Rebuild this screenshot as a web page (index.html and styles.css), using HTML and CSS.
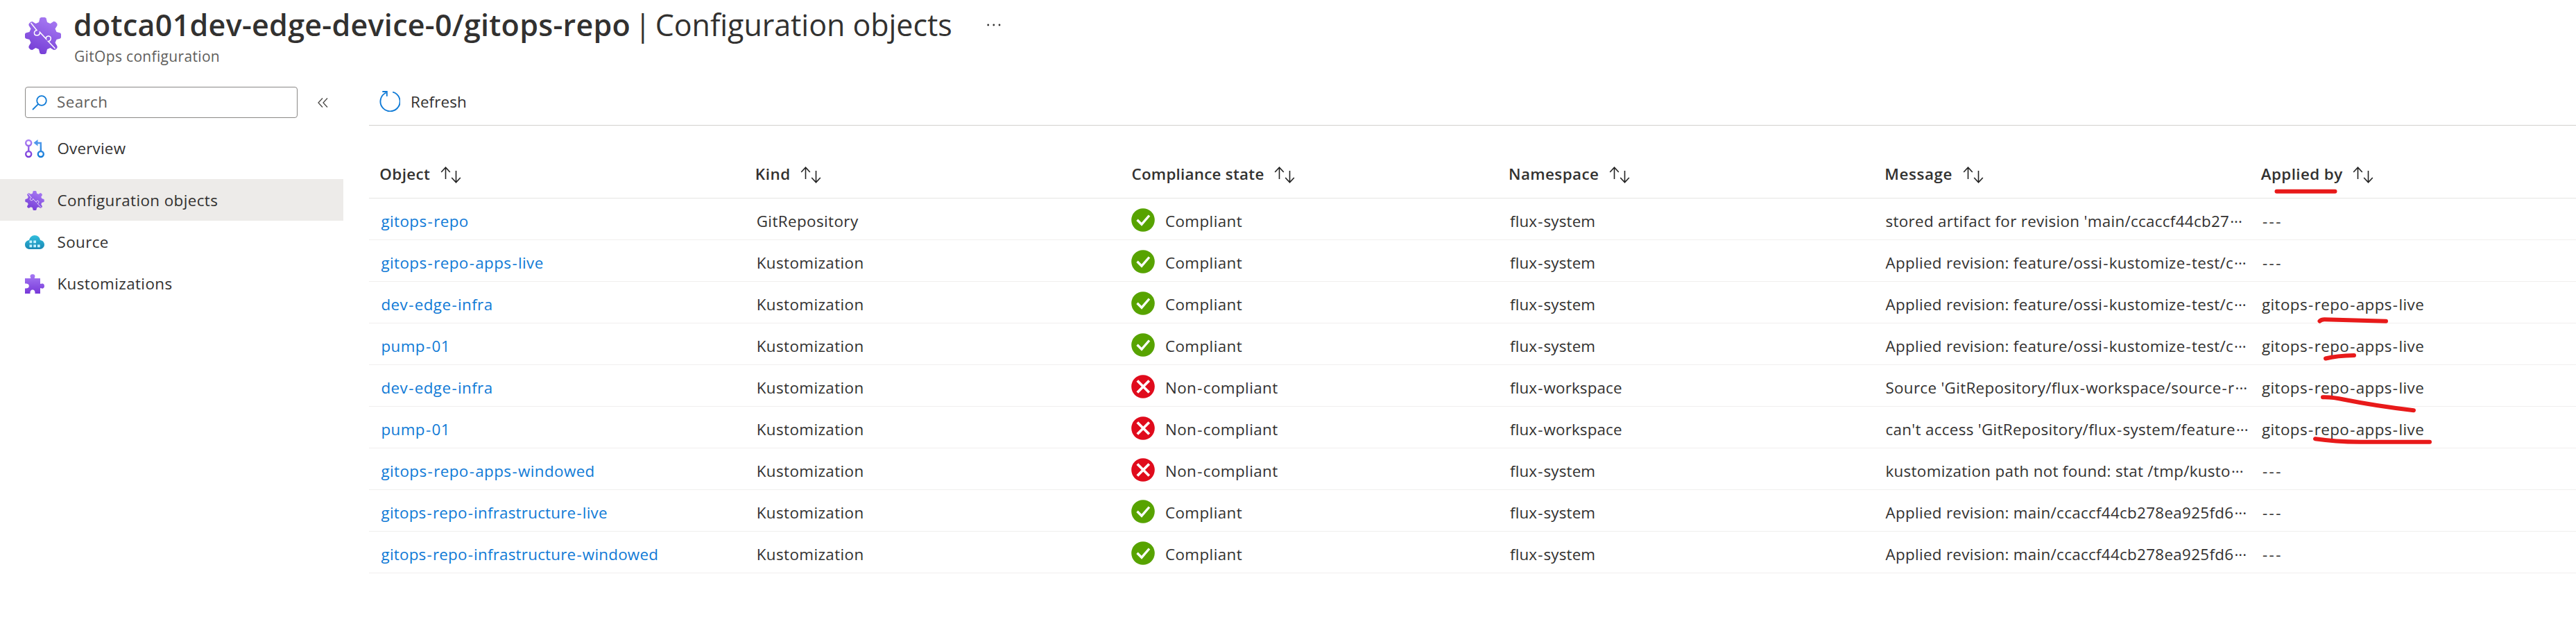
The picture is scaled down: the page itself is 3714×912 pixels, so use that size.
FILE: index.html
```
<!DOCTYPE html>
<html lang="en">
<head>
<meta charset="utf-8">
<title>Configuration objects</title>
<link rel="stylesheet" href="styles.css">
</head>
<body>
<svg class="defs" aria-hidden="true">
  <defs>
    <linearGradient id="purple" x1="0" y1="1" x2="0.4" y2="0"><stop offset="0" stop-color="#6f35d2"/><stop offset="1" stop-color="#a274f0"/></linearGradient>
    <linearGradient id="purpleV" x1="0" y1="1" x2="0" y2="0"><stop offset="0" stop-color="#7738d8"/><stop offset="1" stop-color="#a67af4"/></linearGradient>
    <linearGradient id="blueV" gradientUnits="userSpaceOnUse" x1="0" y1="27" x2="0" y2="0"><stop offset="0" stop-color="#0f7ad6"/><stop offset="1" stop-color="#5ea0ef"/></linearGradient>
    <linearGradient id="purpleU" gradientUnits="userSpaceOnUse" x1="0" y1="27" x2="0" y2="0"><stop offset="0" stop-color="#7738d8"/><stop offset="1" stop-color="#b088f6"/></linearGradient>
    <linearGradient id="teal" x1="0" y1="1" x2="0" y2="0"><stop offset="0" stop-color="#1988b4"/><stop offset="1" stop-color="#32bedd"/></linearGradient>
    <symbol id="gear" viewBox="0 0 52 53">
      <path fill="url(#purple)" d="M23.500 0h5l2 1 1.500 6 4.500 2 5-3.200 2.500.7 2.500 2.800v2.500l-3 4.700 2 4.500 5.500 1.500 1 1.500v5l-1 1.500-5.500 1.500-2 4.500 3 5v2.500l-2.500 2.500-2.500.5-5-3-4.500 2-1.500 6-2 1h-5l-2-1-1.500-6-4.500-2-5 3-2.500-.5-2.500-2.500v-2.500l3-5-2-4.500-5.500-1.500-1-1.500v-5l1-1.500 5.500-1.500 2-4.500-3-5V9.500l2.500-2.800 2.500-.7 5 3 4.500-2 1.500-6z"/>
      <path fill="none" stroke="#fff" stroke-width="1.500" d="M8.500 8l8.500 10.500c-5 1.500-4.500 7.500 0 7.500 3.500 0 4.500-2 4.500-4.500l9 9.500c-1-5 6.500-5.500 6.800-1 .2 3-1.800 4.500-3.800 4.500L43.500 45"/>
    </symbol>
    <symbol id="sort" viewBox="0 0 30 24"><path d="M7.500 18V1M1.200 8L7.500 1.200 13.800 8M22.500 6v17M16.200 16l6.300 6.800L28.800 16"/></symbol>
    <symbol id="ok" viewBox="0 0 34 34"><circle cx="17" cy="17" r="16.800" fill="#57a300"/><path fill="none" stroke="#fff" stroke-width="3.400" d="M8.500 16.700l6.500 6.500L26 10.500"/></symbol>
    <symbol id="bad" viewBox="0 0 34 34"><circle cx="17" cy="17" r="16.800" fill="#e00b1c"/><path fill="none" stroke="#fff" stroke-width="3.800" d="M8.800 8.500l17 17M25.800 8.500l-17 17"/></symbol>
  </defs>
</svg>
<header class="head">
  <svg class="head-icon"><use href="#gear"/></svg>
  <div>
    <h1 class="title"><b class="title-name">dotca01dev-edge-device-0/gitops-repo</b><span class="title-bar">|</span><span class="title-page">Configuration objects</span><svg class="more" viewBox="0 0 20 4"><circle cx="1.700" cy="2" r="1.400"/><circle cx="9.800" cy="2" r="1.400"/><circle cx="18" cy="2" r="1.400"/></svg></h1>
    <p class="subtitle">GitOps configuration</p>
  </div>
</header>
<div class="layout">
  <nav class="side">
    <div class="search-row">
      <div class="search"><svg class="search-icon" viewBox="0 0 22 22"><circle cx="14" cy="8" r="6.800"/><path d="M9.200 12.800L1 21"/></svg><span class="search-text">Search</span></div>
      <svg class="collapse" viewBox="0 0 15 14"><path d="M7 .5L1 7l6 6.500M14 .5L8 7l6 6.500"/></svg>
    </div>
    <a class="item first"><svg class="item-icon" viewBox="0 0 28 28"><g fill="none" stroke-width="2.400"><g stroke="url(#purpleU)"><circle cx="5.200" cy="6" r="4"/><circle cx="5.200" cy="22" r="4"/><path d="M5.300 10l-.1 8"/></g><g stroke="url(#blueV)"><circle cx="22.800" cy="22" r="4"/><path d="M22.900 18l-.1-12H17"/></g></g><path fill="#4f97ea" d="M12.500 5.800l6-4.800v9.600z"/></svg><span>Overview</span></a>
    <a class="item active"><svg class="item-icon"><use href="#gear"/></svg><span>Configuration objects</span></a>
    <a class="item"><svg class="item-icon" viewBox="0 0 28 28"><path fill="url(#teal)" d="M7 24c-4 0-7-2.500-7-6.500 0-3.500 2.500-6 6-6.500C7 7 10 4 14 4c4.500 0 7.500 3 8 7 3.500.3 6 3 6 6.500S25 24 21.500 24z"/><path fill="#c3f1ff" d="M6.500 11.500h3.700v3.700H6.500zM12.300 11.500h3.700v3.700h-3.700zM6.500 17.500h3.700v3.700H6.500zM12.300 17.500h3.700v3.700h-3.700zM18 17.500h3.700v3.700H18z"/></svg><span>Source</span></a>
    <a class="item"><svg class="item-icon" viewBox="0 0 28 28"><path fill="url(#purpleV)" d="M0 6h7.500c.8 0 1-.6.500-1.300C7 3 7.500 0 11 0s4 3 3 4.700c-.5.700-.3 1.300.5 1.300H22v7.300c0 .8.600 1 1.300.6 1.700-1 4.700-.5 4.700 3.100s-3 4.200-4.700 3.200c-.7-.5-1.300-.2-1.300.6V28h-7.500c.3-3-.5-5.500-3.500-5.500S7.300 25 7.500 28H0v-7.500c3 .3 5.800-.5 5.800-3.500S3 13.300 0 13.500z"/></svg><span>Kustomizations</span></a>
  </nav>
  <main class="main">
    <div class="toolbar"><svg class="refresh" viewBox="0 0 30 30"><path fill="none" stroke-width="1.900" d="M19.200 1.600A14.100 14.100 0 1 1 9.500 2.500M4.300 1h6.500v6.800"/></svg><span>Refresh</span></div>
    <div class="table" id="table">
      <div class="row header">
        <div class="cell"><span>Object</span><svg class="sort"><use href="#sort"/></svg></div>
        <div class="cell wide"><span>Kind</span><svg class="sort"><use href="#sort"/></svg></div>
        <div class="cell tight"><span>Compliance state</span><svg class="sort"><use href="#sort"/></svg></div>
        <div class="cell"><span>Namespace</span><svg class="sort"><use href="#sort"/></svg></div>
        <div class="cell wide"><span>Message</span><svg class="sort"><use href="#sort"/></svg></div>
        <div class="cell"><span>Applied by</span><svg class="sort"><use href="#sort"/></svg></div>
      </div>
    </div>
  </main>
</div>
<svg class="ink" viewBox="0 0 3714 912"><path d="M3282.500 275.700h84M3344.500 462.700q2.500-2.500 7-2.400L3440 462.700M3353 516.500q16-4 41-4.500M3349 572.200q13-.5 31 3.500 45 9 100 15.500M3338 632.300q28 4.200 65 4.500H3503"/></svg>
<script src="table.js"></script>
</body>
</html>
```
FILE: table.js
```
const rows = [
  ['gitops-repo', 'GitRepository', 1, 'flux-system', "stored artifact for revision 'main/ccaccf44cb27", '---'],
  ['gitops-repo-apps-live', 'Kustomization', 1, 'flux-system', 'Applied revision: feature/ossi-kustomize-test/c', '---'],
  ['dev-edge-infra', 'Kustomization', 1, 'flux-system', 'Applied revision: feature/ossi-kustomize-test/c', 'gitops-repo-apps-live'],
  ['pump-01', 'Kustomization', 1, 'flux-system', 'Applied revision: feature/ossi-kustomize-test/c', 'gitops-repo-apps-live'],
  ['dev-edge-infra', 'Kustomization', 0, 'flux-workspace', "Source 'GitRepository/flux-workspace/source-r", 'gitops-repo-apps-live'],
  ['pump-01', 'Kustomization', 0, 'flux-workspace', "can't access 'GitRepository/flux-system/feature", 'gitops-repo-apps-live'],
  ['gitops-repo-apps-windowed', 'Kustomization', 0, 'flux-system', 'kustomization path not found: stat /tmp/kusto', '---'],
  ['gitops-repo-infrastructure-live', 'Kustomization', 1, 'flux-system', 'Applied revision: main/ccaccf44cb278ea925fd6', '---'],
  ['gitops-repo-infrastructure-windowed', 'Kustomization', 1, 'flux-system', 'Applied revision: main/ccaccf44cb278ea925fd6', '---']
];
// Hyphens get a little room on both sides.
const hy = text => text.replace(/-/g, '<i class="hy">-</i>');
document.getElementById('table').insertAdjacentHTML('beforeend', rows.map(([object, kind, ok, ns, message, by]) => `
  <div class="row">
    <div class="cell"><a class="link${object.length > 30 ? ' long' : ''}">${hy(object)}</a></div>
    <div class="cell"><span>${kind}</span></div>
    <div class="cell state"><svg class="status"><use href="#${ok ? 'ok' : 'bad'}"/></svg><span>${hy(ok ? 'Compliant' : 'Non-compliant')}</span></div>
    <div class="cell namespace"><span>${hy(ns)}</span></div>
    <div class="cell message"><span>${hy(message)}</span><span class="dots">···</span></div>
    <div class="cell"><span>${hy(by)}</span></div>
  </div>`).join(''));
```
FILE: styles.css
```
* { box-sizing: border-box; }
body { margin: 0; width: 3714px; height: 912px; overflow: hidden; position: relative; background: #fff; color: #323130; font: 22.4px/30px "Open Sans", "Noto Sans", sans-serif; letter-spacing: 0.4px; }
.defs { position: absolute; width: 0; height: 0; }
.head { display: flex; gap: 19px; height: 125px; padding-left: 36px; }
.head-icon { width: 52px; height: 53px; margin-top: 25px; }
.title { display: flex; align-items: flex-start; margin: 0 0 0 -1px; height: 66px; padding-top: 6px; font-size: 43px; font-weight: 400; line-height: 60px; letter-spacing: 0; white-space: pre; }
.title-name { font-weight: 600; letter-spacing: 0.29px; }
.title-bar { margin: 0 6px; }
.title-page { letter-spacing: -0.05px; }
.more { width: 20px; height: 4px; margin: 28px 0 0 50px; fill: #323130; }
.subtitle { margin: 0; color: #605e5c; font-size: 21px; letter-spacing: 0.33px; }
.layout { display: flex; }
.side { width: 495px; }
.search-row { display: flex; align-items: center; gap: 29px; padding-left: 36px; height: 45px; margin-bottom: 14px; }
.search { display: flex; align-items: center; gap: 14px; width: 393px; height: 45px; padding-left: 9px; border: 1.750px solid #8a8886; border-radius: 4px; color: #605e5c; }
.search-icon { width: 22px; height: 22px; fill: none; stroke: #0f7ad6; stroke-width: 1.800; }
.search-text { padding-bottom: 2px; }
.collapse { width: 15px; height: 14px; fill: none; stroke: #484644; stroke-width: 1.300; }
.item { display: flex; align-items: center; gap: 18.500px; height: 60px; padding: 2px 0 0 36px; }
.item.first { margin-bottom: 14px; padding-top: 0; letter-spacing: 0.2px; }
.item.active { background: #edebe9; }
.item-icon { width: 28px; height: 28px; }
.main { margin-left: 37px; width: 3182px; }
.toolbar { display: flex; align-items: center; gap: 15px; height: 56px; padding: 0 0 12px 15px; border-bottom: 1px solid #d2d0ce; letter-spacing: 0.1px; }
.refresh { width: 30px; height: 30px; margin-top: -2px; stroke: #0f7ad6; }
.row { display: grid; grid-template-columns: 541.200px 540.300px 546px 541.500px 542.500px 1fr; height: 60px; padding: 6px 0 0 17.500px; border-bottom: 1px solid #f0efee; align-items: center; }
.row.header { grid-template-columns: 541.500px 542.700px 543.500px 542.300px 542.500px 1fr; height: 105px; padding: 35px 0 0 15.300px; font-weight: 600; border-color: #e5e4e3; }
.cell { display: flex; align-items: center; white-space: pre; }
.header .cell { gap: 14.500px; }
.cell.wide { letter-spacing: 0.6px; }
.cell.tight { letter-spacing: 0.24px; }
.sort { width: 30px; height: 24px; margin-top: 2px; fill: none; stroke: #222; stroke-width: 1.600; }
.link { color: #0f7ad6; }
.link.long { letter-spacing: 0.22px; }
.hy { padding: 0 1px; font-style: normal; }
.state { gap: 15px; }
.status { width: 34px; height: 34px; margin-top: -4px; }
.namespace { letter-spacing: 0.14px; }
.message { letter-spacing: 0.31px; }
.dots { margin-left: 1px; letter-spacing: 0; }
.ink { position: absolute; left: 0; top: 0; width: 3714px; height: 912px; fill: none; stroke: #e81a1a; stroke-width: 6; stroke-linecap: round; stroke-linejoin: round; pointer-events: none; }
```
